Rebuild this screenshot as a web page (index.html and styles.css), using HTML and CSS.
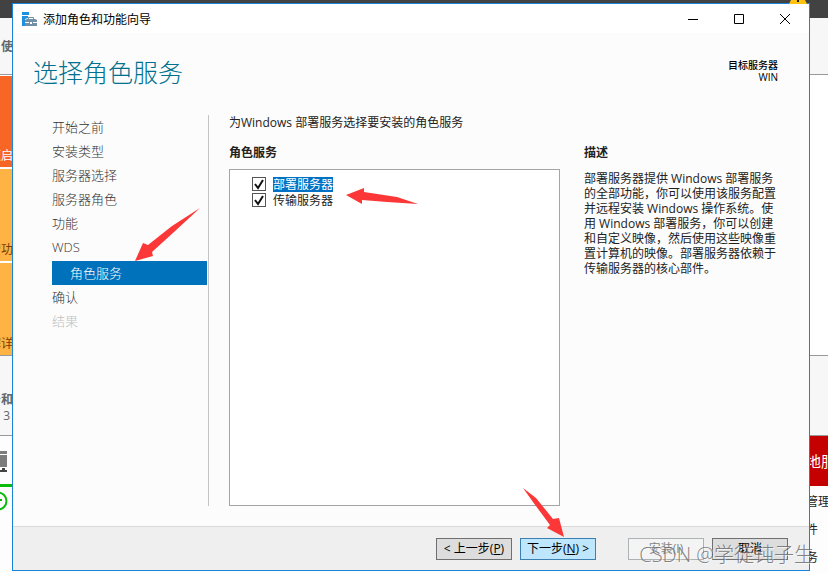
FILE: index.html
```html
<!DOCTYPE html>
<html lang="zh-CN">
<head>
  <meta charset="UTF-8">
  <meta name="viewport" content="width=device-width, initial-scale=1.0">
  <title>添加角色和功能向导</title>
  <link rel="stylesheet" href="styles.css">
</head>
<body>

  <div class="desktop">
    <!-- Server manager, left edge -->
    <div class="side side-left">
      <div class="bar"></div>
      <div class="panel-head head-top"><span>使</span></div>
      <div class="tile tile-start"><span>速启</span></div>
      <div class="tile"><span>增功</span></div>
      <div class="tile tile-last"><span>解详</span></div>
      <div class="panel-head head-groups"><span>务和</span><small>3</small></div>
      <div class="server-row">
        <svg width="8" height="22" viewBox="0 0 8 22">
          <path fill="#7c7c7c" d="M0 0h7v3H0zM0 4h7v12H0z"/>
          <path fill="#444" d="M2 17h3v2h2v2H0v-2h2z"/>
        </svg>
      </div>
      <div class="status-row">
        <svg width="8" height="20" viewBox="0 0 8 20">
          <circle cx="-2" cy="10" r="8.500" fill="none" stroke="#0abb0a" stroke-width="2"/>
          <path d="M-2 9h4" stroke="#0abb0a" stroke-width="2"/>
        </svg>
      </div>
    </div>

    <!-- Wizard -->
    <div class="dialog">
      <div class="titlebar">
        <svg class="app-icon" width="16" height="16" viewBox="0 0 16 16">
          <path fill="#1e90e0" d="M0 1h7v3H0zM0 5h6v2L3 8v7H0z"/>
          <path fill="#7190a8" d="M3 9l2-1h8l2 1v6H3z"/>
          <path fill="none" stroke="#7190a8" d="M6.500 8.500v-2h5v2"/>
          <path fill="none" stroke="#fff" d="M3 11.500h4m4 0h4"/>
          <path fill="#fff" d="M8 11h2v2H8z"/>
        </svg>
        <span class="caption">添加角色和功能向导</span>
        <button class="win-btn" aria-label="最小化"><svg width="12" height="12"><path d="M1 6.500h10"/></svg></button>
        <button class="win-btn" aria-label="最大化"><svg width="12" height="12"><path d="M1.500 1.500h9v9h-9z"/></svg></button>
        <button class="win-btn" aria-label="关闭"><svg width="12" height="12"><path d="M1 1l10 10M11 1L1 11"/></svg></button>
      </div>

      <div class="header">
        <h1>选择角色服务</h1>
        <div class="target"><b>目标服务器</b><br>WIN</div>
      </div>

      <div class="content">
        <nav class="steps">
          <a href="#">开始之前</a>
          <a href="#">安装类型</a>
          <a href="#">服务器选择</a>
          <a href="#">服务器角色</a>
          <a href="#">功能</a>
          <a href="#">WDS</a>
          <a href="#" class="current">角色服务</a>
          <a href="#">确认</a>
          <a href="#" class="disabled">结果</a>
        </nav>

        <div class="roles">
          <p class="intro">为Windows 部署服务选择要安装的角色服务</p>
          <h2>角色服务</h2>
          <div class="role-list">
            <label><input type="checkbox" checked><span class="selected">部署服务器</span></label>
            <label><input type="checkbox" checked><span>传输服务器</span></label>
          </div>
        </div>

        <div class="description">
          <h2>描述</h2>
          <p>部署服务器提供 Windows 部署服务<br>的全部功能，你可以使用该服务配置<br>并远程安装 Windows 操作系统。使<br>用 Windows 部署服务，你可以创建<br>和自定义映像，然后使用这些映像重<br>置计算机的映像。部署服务器依赖于<br>传输服务器的核心部件。</p>
        </div>
      </div>

      <div class="footer">
        <button class="btn">&lt; 上一步(<u>P</u>)</button>
        <button class="btn btn-next">下一步(<u>N</u>) &gt;</button>
        <button class="btn btn-install" disabled>安装(I)</button>
        <button class="btn">取消</button>
      </div>
    </div>

    <!-- Server manager, right edge -->
    <div class="side side-right">
      <div class="bar"></div>
      <div class="panel-head head-top"></div>
      <div class="blank"></div>
      <div class="panel-head head-groups"></div>
      <div class="alert"><span>地服</span></div>
      <ul class="links">
        <li>管理</li>
        <li>件</li>
        <li>务</li>
      </ul>
    </div>

    <svg class="warning" width="20" height="4" viewBox="0 0 20 4">
      <path fill="#ffc20e" d="M3 0h14l2 4H1z"/>
      <path fill="#222" d="M9 0h2v2H9z"/>
    </svg>

    <!-- Pointers -->
    <svg class="arrow arrow-step" width="68" height="56" viewBox="0 0 68 56">
      <path d="M1 54L9 36l5 2L38 19 66 1 40 25 18 45l1 4z"/>
    </svg>
    <svg class="arrow arrow-role" width="74" height="20" viewBox="0 0 74 20">
      <path d="M1 8L19 1v4l33 5 21 7-31-2-25-2v4z"/>
    </svg>
    <svg class="arrow arrow-next" width="44" height="50" viewBox="0 0 44 50">
      <path d="M1 1l13 10 17 21 6-1 5 19-17-9 3-3L11 15z"/>
    </svg>

    <div class="watermark">CSDN @学徒钝子生</div>
  </div>

</body>
</html>
```
FILE: styles.css
```css
* {
  box-sizing: border-box;
}
body {
  margin: 0;
  font-family: "Open Sans", "Noto Sans CJK SC", sans-serif;
  font-size: 12px;
  color: #222;
}
h1, h2, p, ul {
  margin: 0;
  padding: 0;
}
.desktop {
  position: relative;
  display: grid;
  grid-template-columns: 12px 1fr 18px;
  min-height: 100vh;
  background: linear-gradient(#424242 18px, #fdfdfd 18px);
  overflow: hidden;
}

/* edges of the window behind */
.side {
  display: flex;
  flex-direction: column;
  overflow: hidden;
  white-space: nowrap;
  line-height: 16px;
}
.bar {
  height: 18px;
  background: #424242;
}
.panel-head {
  background: #f7f7f7;
  border-bottom: 1px solid #999;
  color: #666;
  font-weight: bold;
}
.head-top {
  height: 57px;
  padding-top: 21px;
}
.head-groups {
  height: 80px;
  padding-top: 36px;
}
.side-left .panel-head,
.tile {
  display: flex;
  flex-direction: column;
  align-items: flex-end;
}
.side-left span {
  margin-right: -1px;
}
.panel-head small {
  padding-right: 2px;
  font-size: 12px;
  font-weight: normal;
}
.tile {
  height: 94px;
  justify-content: flex-end;
  padding-bottom: 3px;
  background: #ffb345;
  border-bottom: 2px solid #fff;
  color: #7a3b00;
}
.tile-start {
  background: #f76624;
  border-top: 1px solid #fff;
  color: #fff;
}
.tile-last {
  height: 93px;
  border-bottom: 1px solid #999;
}
.server-row {
  height: 51px;
  padding-top: 15px;
  border-bottom: 3px solid #0abb0a;
}
.status-row {
  padding-top: 4px;
}
.blank {
  height: 281px;
  background: #fff;
  border-bottom: 1px solid #999;
}
.alert {
  display: flex;
  justify-content: flex-end;
  height: 50px;
  background: #c40000;
  color: #fff;
  font-size: 15px;
  line-height: 50px;
}
.alert span {
  margin-right: -8px;
}
.links {
  display: flex;
  flex-direction: column;
  gap: 12px;
  padding-top: 8px;
  list-style: none;
}
.links li {
  margin-left: -4px;
}

/* wizard */
.dialog {
  display: flex;
  flex-direction: column;
  margin: 3px 0 2px;
  border: 1px solid #1883d7;
  background: #fcfcfc;
}
.titlebar {
  display: flex;
  align-items: center;
  height: 29px;
  padding-right: 1px;
  background: #fff;
  color: #000;
}
.app-icon {
  margin: 0 5px 0 9px;
}
.caption {
  flex: 1;
}
.win-btn {
  display: flex;
  align-items: center;
  justify-content: center;
  width: 46px;
  height: 28px;
  padding: 0;
  border: none;
  background: none;
}
.win-btn path {
  fill: none;
  stroke: #000;
}
.header {
  display: flex;
  justify-content: space-between;
  height: 82px;
  padding: 22px 31px 0 20px;
}
h1 {
  color: #00708f;
  font-size: 25px;
  font-weight: 300;
  line-height: 34px;
}
.target {
  padding-top: 4px;
  color: #000;
  font-size: 10px;
  line-height: 12px;
  text-align: right;
}
.target b {
  font-weight: 500;
}
.content {
  flex: 1;
  display: grid;
  grid-template-columns: 157px 1fr 196px;
  padding: 0 29px 20px 39px;
}
.steps {
  display: flex;
  flex-direction: column;
  padding-right: 1px;
  border-right: 1px solid #c3c3c3;
}
.steps a {
  height: 24px;
  color: #333;
  font-size: 13px;
  font-weight: 300;
  line-height: 25px;
  text-decoration: none;
}
.steps .current {
  margin: 2px 0 0;
  padding-left: 18px;
  background: #0072bc;
  color: #fff;
}
.steps .disabled {
  color: #c0c0c0;
}
.roles {
  display: flex;
  flex-direction: column;
  padding: 0 24px 0 20px;
}
.intro {
  line-height: 15px;
}
h2 {
  font-size: 12px;
  line-height: 15px;
}
.roles h2 {
  margin: 15px 0 9px;
}
.role-list {
  flex: 1;
  padding: 6px 22px;
  border: 1px solid #a5a5a5;
  background: #fff;
}
.role-list label {
  display: flex;
  align-items: center;
  gap: 7px;
  height: 16px;
  line-height: 15px;
}
.role-list input {
  appearance: none;
  width: 14px;
  height: 14px;
  margin: 0;
  border: 1px solid #555;
  background: #fff;
}
.role-list input:checked {
  background: #fff url("data:image/svg+xml,%3Csvg xmlns='http://www.w3.org/2000/svg' viewBox='0 0 12 12'%3E%3Cpath d='M2 6l3 4 5-8' fill='none' stroke='%23111' stroke-width='2'/%3E%3C/svg%3E");
}
.role-list .selected {
  background: #0072c6;
  color: #fff;
}
.description {
  padding-top: 30px;
}
.description p {
  margin-top: 11px;
  line-height: 15px;
  white-space: nowrap;
}
.footer {
  display: flex;
  justify-content: flex-end;
  gap: 8px;
  padding: 11px 21px 10px;
  border-top: 1px solid #dadada;
  background: #efefef;
}
.btn {
  width: 76px;
  height: 22px;
  padding: 0;
  border: 1px solid #707070;
  background: #dddddd;
  color: #000;
  font: inherit;
  line-height: 20px;
  white-space: nowrap;
}
.btn-next {
  border-color: #3c7fb1;
  background: #bee6fd;
}
.btn-install {
  margin-left: 24px;
  border-color: #adb2b5;
  background: #f4f4f4;
  color: #838383;
}

/* things lying over the windows */
.warning {
  position: absolute;
  top: 0;
  right: 20px;
}
.arrow {
  position: absolute;
  fill: #fb3737;
}
.arrow-step {
  left: 134px;
  top: 207px;
}
.arrow-role {
  left: 345px;
  top: 187px;
}
.arrow-next {
  left: 522px;
  top: 487px;
}
.watermark {
  position: absolute;
  right: 14px;
  bottom: 3px;
  color: rgba(100, 100, 100, 0.8);
  font-size: 20px;
  font-weight: 300;
  line-height: 30px;
  text-shadow: 1px 1px 0 rgba(255, 255, 255, 0.6);
}
```
